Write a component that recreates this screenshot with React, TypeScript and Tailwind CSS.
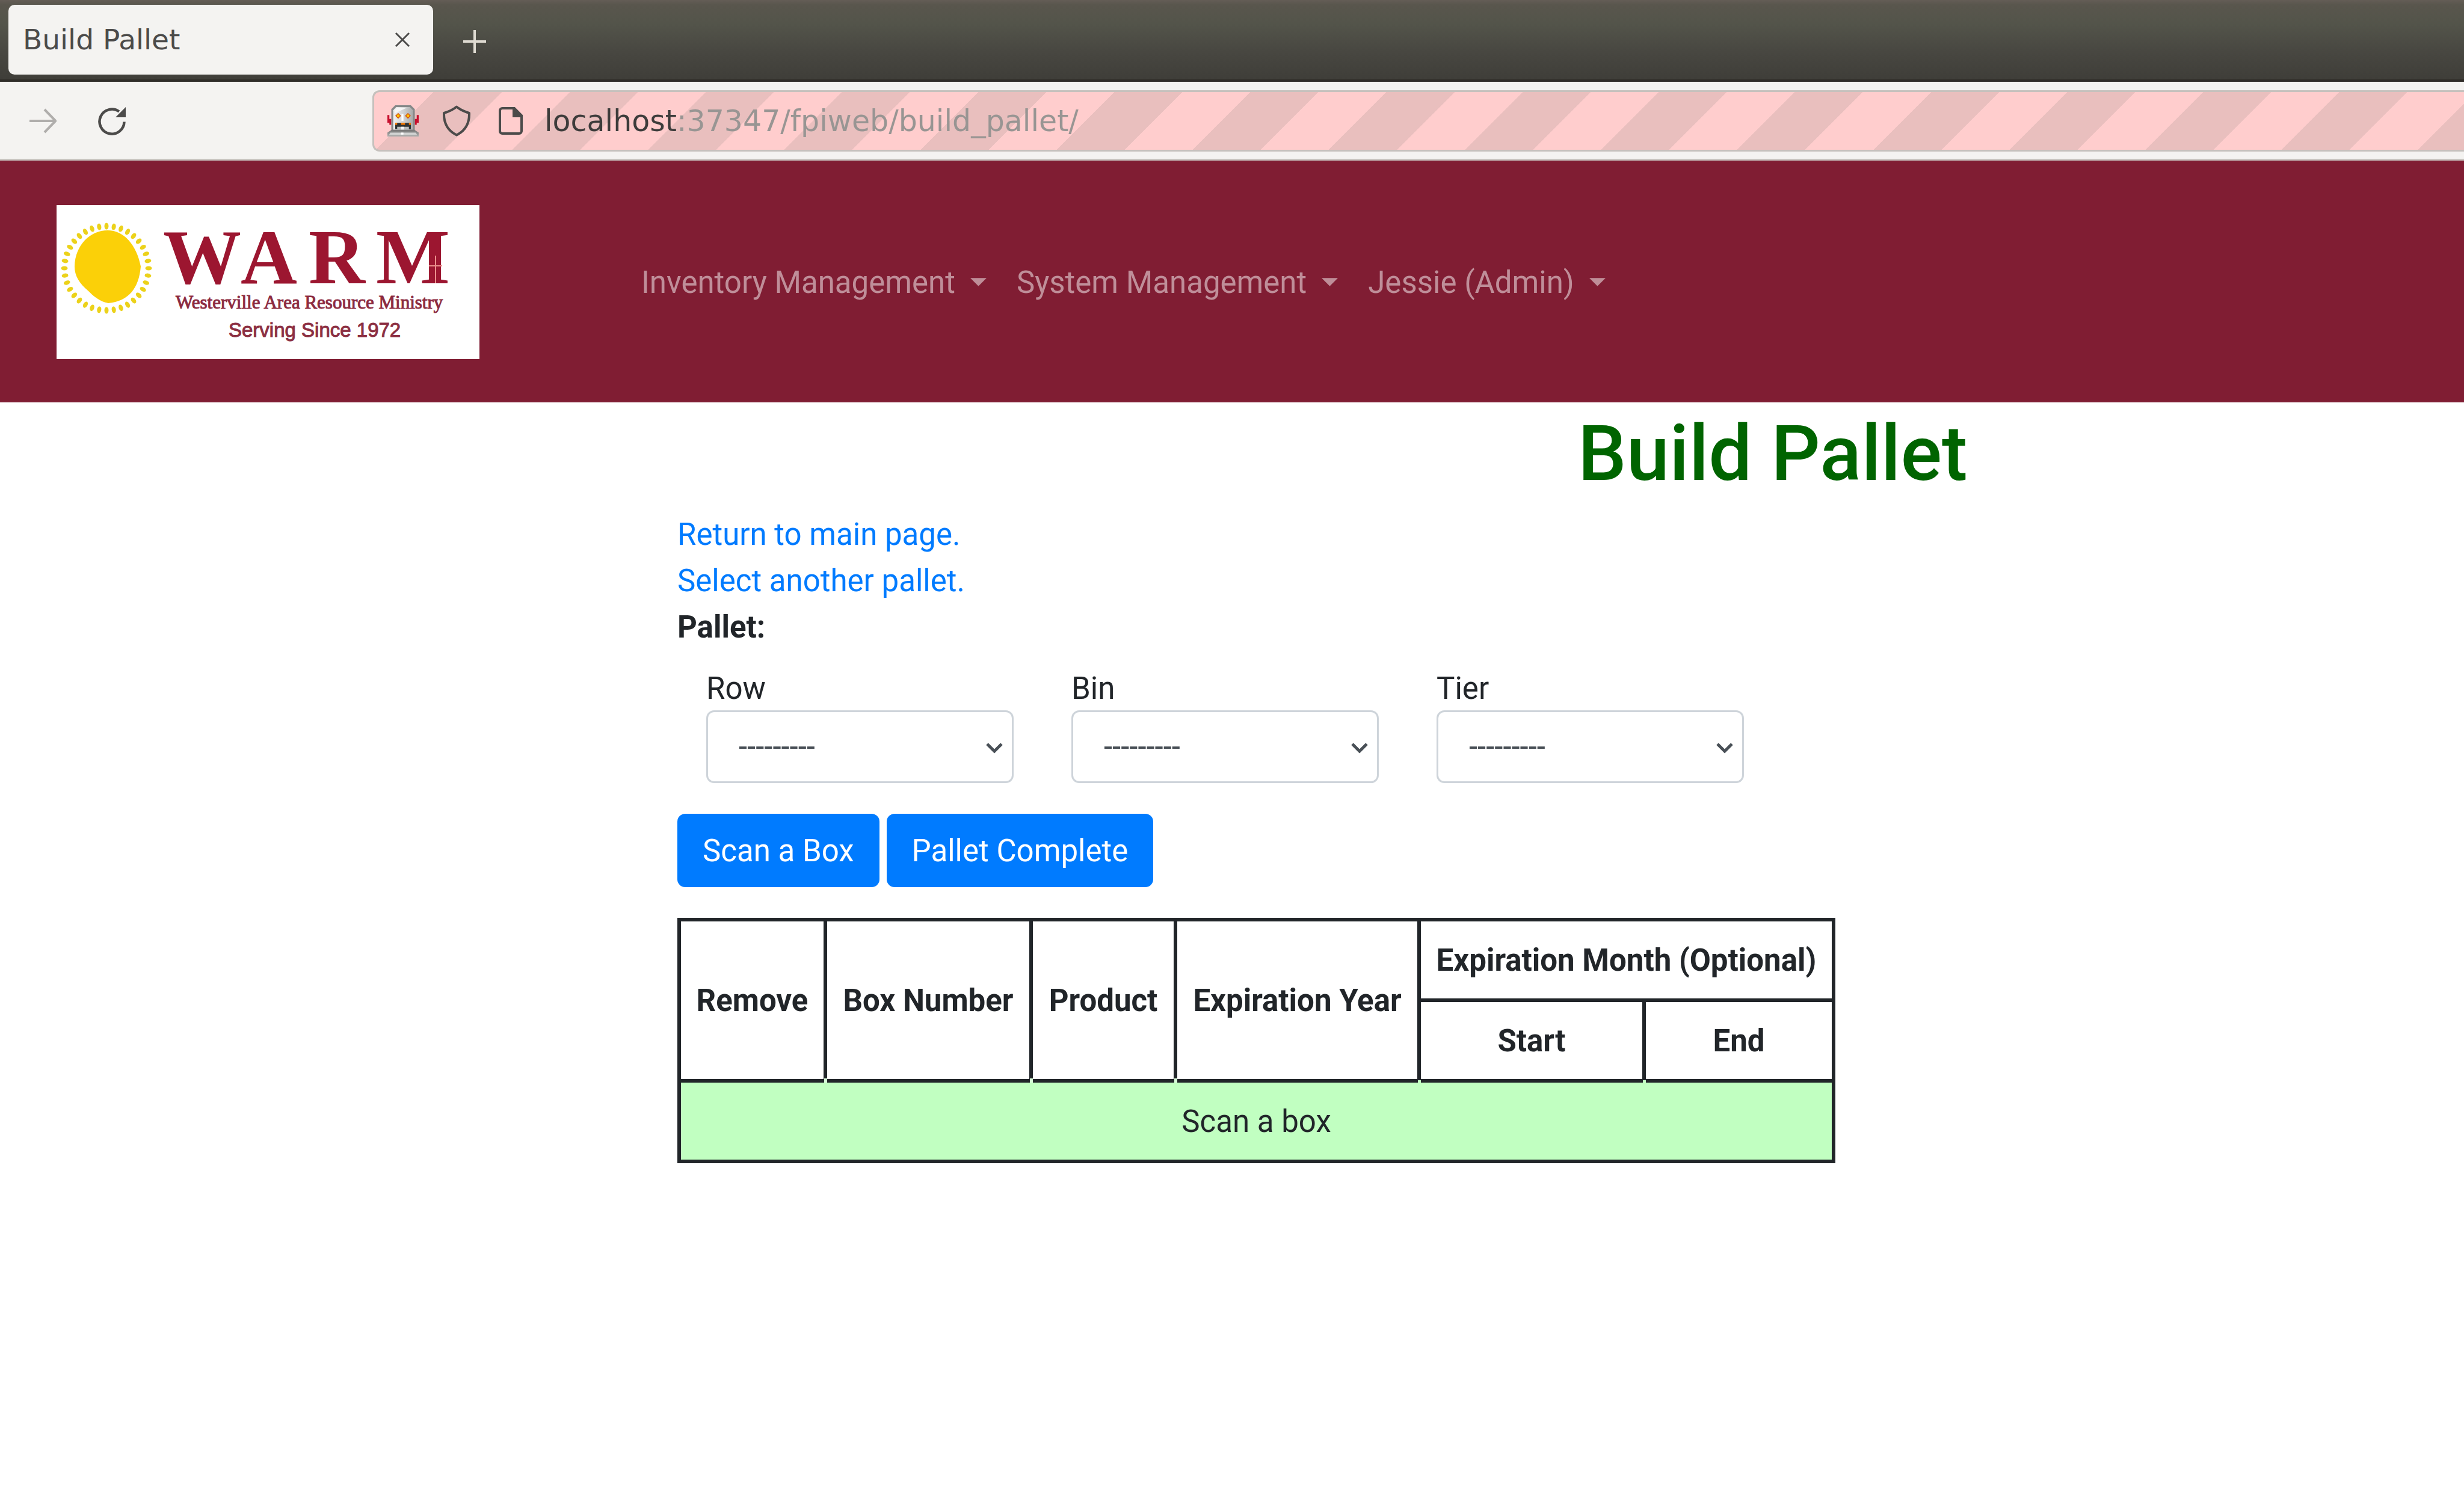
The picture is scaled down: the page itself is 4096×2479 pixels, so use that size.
import React from "react";

const SERIF = "font-['Liberation_Serif',serif]";
const SANS = "font-['Liberation_Sans',sans-serif]";

function TabStrip() {
  return (
    <header className="flex h-[136px] items-start border-b-4 border-[#302d29] bg-[linear-gradient(#645d56_0%,#59564d_6%,#53544a_30%,#484741_65%,#3f3e39_100%)] pt-2 pl-3.5 font-['DejaVu_Sans',sans-serif]">
      <div className="flex h-[116px] w-[706px] items-center justify-between rounded-[10px] bg-[#f4f3f1] pr-[38px] pl-6">
        <span className="text-[47px] leading-[52px] text-[#4c4b4a]">Build Pallet</span>
        <button type="button" aria-label="Close tab">
          <svg className="size-[26px]" viewBox="0 0 26 26" fill="none" stroke="#4c4b4a" strokeWidth="3">
            <path d="M2 2 24 24M24 2 2 24" />
          </svg>
        </button>
      </div>
      <button type="button" aria-label="New tab" className="mt-[42px] ml-[50px]">
        <svg className="size-[38px]" viewBox="0 0 38 38" fill="none" stroke="#dfdbd2" strokeWidth="4">
          <path d="M19 0V38M0 19H38" />
        </svg>
      </button>
    </header>
  );
}

function Robot() {
  return (
    <svg className="size-[52px] shrink-0" viewBox="0 0 16 16" aria-hidden="true">
      <defs>
        <linearGradient id="robot-head" x1="0" x2="1">
          <stop offset="0" stopColor="#f2f2f2" />
          <stop offset="0.55" stopColor="#cfd0d0" />
          <stop offset="1" stopColor="#a9aaaa" />
        </linearGradient>
        <linearGradient id="robot-base" x1="0" x2="0" y1="0" y2="1">
          <stop offset="0" stopColor="#747474" />
          <stop offset="1" stopColor="#aeb0af" />
        </linearGradient>
      </defs>
      <path d="M0 5h1v2h1v3H1V9H0zM16 5h-1v2h-1v3h1V9h1z" fill="#c8102e" />
      <path d="M4 0h8l2 2v11H2V2z" fill="#858888" />
      <path d="M4.500 0.900h7l1.600 1.600v10H3V2.500z" fill="url(#robot-head)" />
      <path d="M4 2.200 5 1.200h5L7 2.600 4 4z" fill="#f6f6f6" />
      <path d="M7.200 4.500h1V8h-1z" fill="#fff" />
      <path d="M5.500 3.900 7 5.400 5.500 6.900 4 5.400zM10.500 3.900 12 5.400 10.500 6.900 9 5.400z" fill="#d45a10" />
      <circle cx="5.500" cy="5.400" r=".7" fill="#ffc400" />
      <circle cx="10.500" cy="5.400" r=".7" fill="#ffc400" />
      <path d="M4 9h8v3.200H4z" fill="#2f3232" />
      <path d="M4 9h1v1H4zM7 9h2v1H7zM11 9h1v1h-1z" fill="#f57900" />
      <path d="M5 11h6v1.500H5z" fill="#b9bbbb" />
      <path d="M7 11h1.500v1.500H7z" fill="#f3f3f3" />
      <path d="M2.200 12.500h11.600L16 14v2H0v-2z" fill="url(#robot-base)" />
      <path d="M1.500 14h13l.7 1.200H.8z" fill="#d0d2d1" />
      <path d="M7 14h1.200v1H7z" fill="#fff" />
    </svg>
  );
}

function Toolbar() {
  return (
    <div className="flex h-[131px] items-center border-b-3 border-[#c9c6c2] bg-[#f4f3f1] pt-0.5 pl-12">
      <button type="button" aria-label="Forward">
        <svg className="h-[42px] w-[46px]" viewBox="0 0 46 42" fill="none" stroke="#b0aeac" strokeWidth="4">
          <path d="M1 21H44M26 2 44.500 21 26 40" />
        </svg>
      </button>
      <button type="button" aria-label="Reload" className="ml-[68px]">
        <svg className="size-[50px]" viewBox="0 0 50 50">
          <path d="M44.500 26.500A20.500 20.500 0 1 1 36 9.500" fill="none" stroke="#4c4b4a" strokeWidth="4.500" />
          <path d="M47 2v17H30z" fill="#4c4b4a" />
        </svg>
      </button>
      <div className="ml-[407px] flex h-[102px] flex-1 items-center rounded-l-[12px] border-3 border-r-0 border-[#c6c1bd] bg-[repeating-linear-gradient(135deg,#ffcdcd_0px,#ffcdcd_70px,#e9bfbe_70px,#e9bfbe_150px,#ffcdcd_150px,#ffcdcd_160px)] pl-[22px]">
        <Robot />
        <svg className="ml-[39px] h-[52px] w-12 shrink-0" viewBox="0 0 48 52" fill="none" stroke="#4c4b4a" strokeWidth="4" strokeLinejoin="round" aria-hidden="true">
          <path d="M24 2.500 C18 7.500 11 10.500 3 13 C2.500 30 9 42 24 49.500 C39 42 45.500 30 45 13 C37 10.500 30 7.500 24 2.500Z" />
        </svg>
        <svg className="ml-[46px] h-[46px] w-10 shrink-0" viewBox="0 0 40 46" aria-hidden="true">
          <path d="M6 2H26L38 14V40a4 4 0 0 1-4 4H6a4 4 0 0 1-4-4V6a4 4 0 0 1 4-4Z" fill="none" stroke="#4c4b4a" strokeWidth="4" />
          <path d="M23 1h4L39 13v4H23z" fill="#4c4b4a" />
        </svg>
        <input
          type="text"
          aria-label="Address"
          defaultValue="localhost:37347/fpiweb/build_pallet/"
          className="ml-9 h-20 min-w-0 flex-1 bg-[linear-gradient(90deg,#3d3c3b_221px,#989593_221px)] bg-clip-text font-['DejaVu_Sans',sans-serif] text-[49px] text-transparent outline-none"
        />
      </div>
    </div>
  );
}

const RAYS = Array.from({ length: 36 }, (_, i) => i * 10);

function Logo() {
  return (
    <svg className="h-64 w-[703px]" viewBox="0 0 703 256" role="img" aria-label="WARM">
      <rect width="703" height="256" fill="#fff" />
      <path d="M85 42C112 42 133 66 140 102C137 138 120 160 86 163C72 161 60 150 52 142C38 130 30 118 30 102C31 66 56 42 85 42Z" fill="#fbd008" />
      <g fill="#ecd21a">
        {RAYS.map((angle) => (
          <ellipse key={angle} cx="83" cy="35" rx="3.500" ry="5.500" transform={`rotate(${angle} 83 105)`} />
        ))}
      </g>
      <g className={`${SERIF} text-[130px] font-bold`} fill="#9c1630">
        <text x="177" y="130">W</text>
        <text x="306" y="130">A</text>
        <text x="419" y="130">R</text>
        <text x="531" y="130">M</text>
      </g>
      <path d="M630 84V130M619 101H641" stroke="#eb8f8c" strokeWidth="2" />
      <text x="198" y="172" className={`${SERIF} text-[31px]`} fill="#8c2a40" stroke="#8c2a40" strokeWidth="1">Westerville Area Resource Ministry</text>
      <text x="286" y="219" className={`${SANS} text-[33px]`} fill="#8c2f42" stroke="#8c2f42" strokeWidth="1">Serving Since 1972</text>
    </svg>
  );
}

function NavMenu({ label }: { label: string }) {
  return (
    <button type="button" className="flex items-center gap-[25px] px-[25px]">
      {label}
      <svg className="h-3.5 w-[27px]" viewBox="0 0 28 14" fill="currentColor" aria-hidden="true">
        <path d="M0 0H28L14 14Z" />
      </svg>
    </button>
  );
}

function NavBar() {
  return (
    <nav className="flex h-[402px] items-center bg-[#801d33] pt-0.5 pl-[94px] text-[51px] leading-[77px] text-[#bf8e99]">
      <a href="#home">
        <Logo />
      </a>
      <div className="ml-[244px] flex">
        <NavMenu label="Inventory Management" />
        <NavMenu label="System Management" />
        <NavMenu label="Jessie (Admin)" />
      </div>
    </nav>
  );
}

function LocationSelect({ label }: { label: string }) {
  const id = `pallet-${label.toLowerCase()}`;
  return (
    <div className="flex w-[511px] flex-col">
      <label htmlFor={id} className="leading-[72px]">{label}</label>
      <div className="relative">
        <select id={id} className="h-[121px] w-full appearance-none rounded-[13px] border-3 border-[#ced4da] bg-white pl-[51px] text-[#495057]">
          <option>---------</option>
        </select>
        <svg className="pointer-events-none absolute top-[54px] right-[18px] h-[18px] w-7" viewBox="0 0 28 18" fill="none" stroke="#495057" strokeWidth="5" aria-hidden="true">
          <path d="M2 2 14 14 26 2" />
        </svg>
      </div>
    </div>
  );
}

const CELL = "relative border-6 border-[#212529] h-[134px] p-0";
const NOTCH_TALL = "after:absolute after:-right-[6px] after:-bottom-[6px] after:h-[7px] after:w-[5px] after:bg-[#d6f8d6]";
const NOTCH_SHORT = "after:absolute after:-right-[6px] after:-bottom-[6px] after:h-[4px] after:w-[5px] after:bg-[#c1ffc1]";

function BoxTable() {
  return (
    <table className="mt-[51px] w-[1925px] table-fixed border-collapse text-center">
      <colgroup>
        <col className="w-[243px]" />
        <col className="w-[342px]" />
        <col className="w-[240px]" />
        <col className="w-[405px]" />
        <col className="w-[374px]" />
        <col />
      </colgroup>
      <thead>
        <tr>
          <th rowSpan={2} className={`${CELL} ${NOTCH_TALL}`}>Remove</th>
          <th rowSpan={2} className={`${CELL} ${NOTCH_TALL}`}>Box Number</th>
          <th rowSpan={2} className={`${CELL} ${NOTCH_TALL}`}>Product</th>
          <th rowSpan={2} className={`${CELL} ${NOTCH_SHORT}`}>Expiration Year</th>
          <th colSpan={2} className={CELL}>Expiration Month (Optional)</th>
        </tr>
        <tr>
          <th className={`${CELL} ${NOTCH_SHORT}`}>Start</th>
          <th className={CELL}>End</th>
        </tr>
      </thead>
      <tbody>
        <tr>
          <td colSpan={6} className={`${CELL} bg-[#c1ffc1]`}>Scan a box</td>
        </tr>
      </tbody>
    </table>
  );
}

export default function App() {
  return (
    <div className="min-h-screen overflow-hidden bg-white font-['Roboto',sans-serif] text-[51px] leading-[77px] text-[#212529]">
      <TabStrip />
      <Toolbar />
      <NavBar />
      <main className="pt-2 pl-[1126px]">
        <h1 className="mb-[19px] pl-[1497px] text-[128px] leading-[154px] font-medium whitespace-nowrap text-[#006400]">Build Pallet</h1>
        <div className="flex flex-col items-start">
          <a href="#main" className="text-[#007bff]">Return to main page.</a>
          <a href="#select" className="text-[#007bff]">Select another pallet.</a>
          <strong className="font-bold">Pallet:</strong>
        </div>
        <form>
          <div className="mt-7 flex gap-24 pl-12">
            <LocationSelect label="Row" />
            <LocationSelect label="Bin" />
            <LocationSelect label="Tier" />
          </div>
          <div className="mt-[51px] flex gap-3">
            <button type="button" className="h-[122px] rounded-[13px] bg-[#007bff] px-[42px] text-white">Scan a Box</button>
            <button type="button" className="h-[122px] rounded-[13px] bg-[#007bff] px-[42px] text-white">Pallet Complete</button>
          </div>
        </form>
        <BoxTable />
      </main>
    </div>
  );
}
